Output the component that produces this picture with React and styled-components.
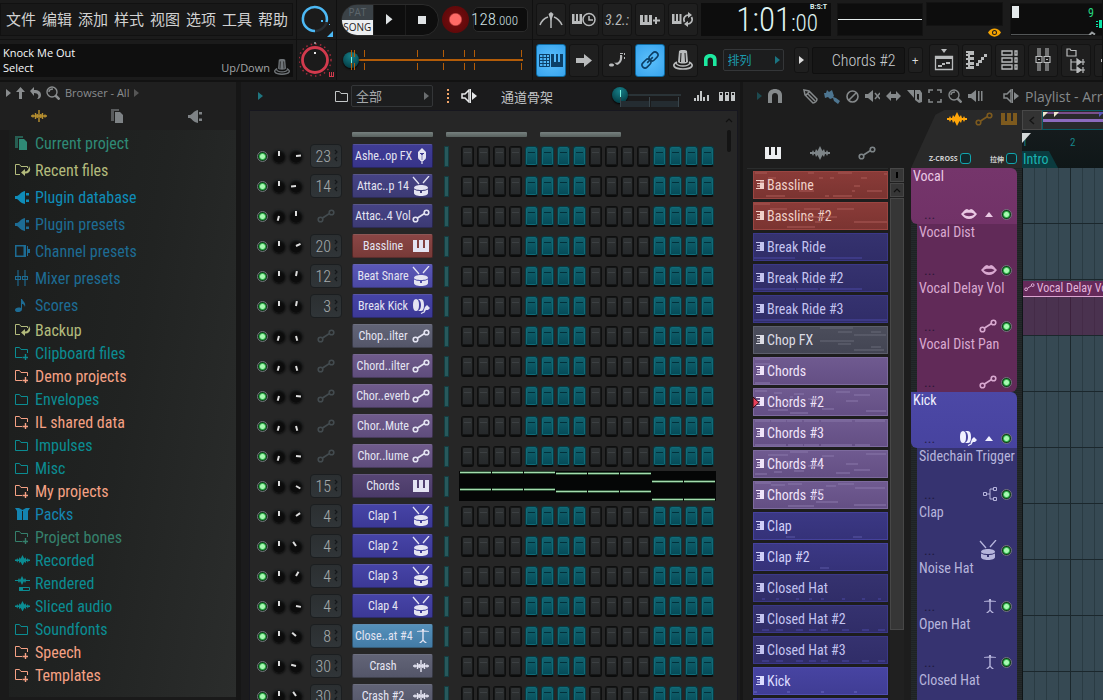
import styled, { createGlobalStyle, css } from "styled-components";
import { useState } from "react";

const GlobalStyle = createGlobalStyle`
* { box-sizing: border-box; }
body {
  margin: 0;
  background: #181818;
  color: #c8cccd;
  font-family: "Open Sans", "Noto Sans CJK SC", sans-serif;
  font-size: 12px;
}
button, input, select { font: inherit; color: inherit; margin: 0; padding: 0; }
button { border: 0; background: none; cursor: pointer; }
svg { display: block; flex: none; }
`;

const narrow = '"Roboto Condensed", "Noto Sans CJK SC", sans-serif';

/* ---------- icons ---------- */

const icons = {
  wave: [20, 14, <path d="M0 6h2l1-2 1 2h1l1-3 1.500 2L10 0l2.500 5L14 3l1 3h1l1-2 1 2h2v2h-2l-1 2-1-2h-1l-1 3-1.500-2L10 14l-2.500-5L6 11 5 8H4l-1 2-1-2H0z" />],
  spikes: [16, 12, <path d="M0 6h16M2 4.500v3M4.500 3v6M8 0v12M6.200 4v4M11.500 3v6M9.800 4v4M14 4.500v3" fill="none" stroke="currentColor" strokeWidth="1.400" />],
  auto: [18, 14, <g fill="none" stroke="currentColor" strokeWidth="1.600"><circle cx="3.500" cy="10.500" r="2.300" /><circle cx="14.500" cy="3.500" r="2.300" /><path d="M5.500 9l7-4.500" /></g>],
  piano: [16, 12, <path d="M0 0h4v8h2V0h4v8h2V0h4v12H0z" />],
  drum: [18, 20, <g><path d="M1 1l6 7M17 0l-6 7" stroke="currentColor" strokeWidth="1.300" /><path d="M2 12c0-2 3-3 7-3s7 1 7 3c0 1-3 2-7 2s-7-1-7-2z" /><path d="M2 13.500c2 1 4 1.500 6 1.500v2h2v-2c2 0 4-.5 6-1.500v3.500c0 2-3 3-7 3s-7-1-7-3z" /></g>],
  kick: [18, 16, <g><path d="M4 1C2 1 1 3 1 7s1 6 3 6 3-2 3-6-1-6-3-6z" /><path d="M6 1h3c2 0 3 2 3 6s-1 6-3 6H6c2-1 3-3 3-6S8 2 6 1z" /><path d="M9 15.500l4-2" stroke="currentColor" strokeWidth="1.200" /><path d="M13 9l2-2 3 3-2 2h-2l-1.500 2-1-1z" /></g>],
  mic: [12, 16, <g><path d="M6 0l4 4v5c0 2-1 3-2 3V5H4v7c-1 0-2-1-2-3V4z" /><path d="M4.500 6v6c0 1 3 1 3 0V6M6 7v9" fill="none" stroke="currentColor" strokeWidth="1.200" /></g>],
  hat: [14, 15, <path d="M1 2l5-.6V0h2v1.400l5 .6v.8H7.700V11l3.300 3H9l-2-2-2 2H3l3.300-3V2.800H1z" />],
  lips: [16, 10, <path fillRule="evenodd" d="M0 5C2 3 4 0 6 0l2 1 2-1c2 0 4 3 6 5-2 3-5 5-8 5S2 8 0 5zm2.500 0C5 8 11 8 13.500 5 11 3.500 9.500 3.500 8 3.800 6.500 3.500 5 3.500 2.500 5z" />],
  route: [14, 14, <path d="M.5 5.500h3v3h-3zM3.500 7H7M10.500 2H7v10h3.500M10.500.5h3v3h-3zM10.500 10.500h3v3h-3z" fill="none" stroke="currentColor" />],
  folder: [13, 12, <path d="M.5 1.500h4l1.500 2h6.500v8H.5z" fill="none" stroke="currentColor" />],
  folderPlus: [13, 14, <g fill="none" stroke="currentColor"><path d="M7 11.500H.5v-10h4l1.500 2h6.500V7" /><path d="M10.500 8v6M7.500 11.500h6" strokeWidth="1.400" /></g>],
  folderBack: [16, 14, <g><path d="M5 11.500H.5v-10h4l1.500 2h6.500V5" fill="none" stroke="currentColor" /><path d="M14 3c3 4 0 8-4 7.500V13L6 9.500 10 6v2.500c2.500 0 4-2 4-5.500z" /></g>],
  pages: [12, 14, <g><path d="M0 0h8v2H3v10H0z" opacity=".6" /><path d="M4 3h5l3 3v8H4z" /></g>],
  plug: [15, 13, <path d="M0 5h2c2 0 3-4 8-5v13C5 12 4 9 2 8H0zM11 2h3v2.500h-3zM11 8.500h3V11h-3z" />],
  channel: [15, 12, <path fillRule="evenodd" d="M0 0h11v12H0zm1.500 1.500v9h7v-9zM12 1h1v3h2v4h-2v3h-1z" />],
  mixer: [13, 16, <path d="M3 0v6M3 10v6M10 0v6M10 10v6M.5 6.500h5v3h-5zM7.500 6.500h5v3h-5zM2 8h2M9 8h2" fill="none" stroke="currentColor" strokeWidth="1.100" />],
  note: [12, 13, <path d="M6 0h1c1 3 4 3 3 8-1-3-2-3-3-3v5c0 4-7 4-7 1 0-2 3-3 6-2z" />],
  box: [15, 12, <path d="M0 0h4l3.500 2L11 0h4l-2 3v9H8V3H7v9H2V3z" />],
  rendered: [16, 15, <g><path d="M0 4h3l1-2 1 2 2-4 2 4 1-2 1 2h4v1h-4l-1 2-1-2-2 4-2-4-1 2-1-2H0z" /><path d="M4.500 11.500h10v3h-10z" fill="none" stroke="currentColor" /><path d="M4 11h4v4H4z" /></g>],
  tri: [5, 8, <path d="M0 0l5 4-5 4z" />],
  up: [9, 12, <path d="M4.500 0L9 5H6v7H3V5H0z" />],
  undo: [11, 12, <path d="M0 4l4-4v3c5 0 7 2 7 5 0 2-1 4-4 4 3-3 1-6-3-6v3z" />],
  search: [14, 14, <g fill="none" stroke="currentColor" strokeWidth="1.400"><circle cx="6" cy="6" r="5" /><path d="M3 6c0-2 2-3 4-3" /><path d="M9.500 9.500l4 4" strokeWidth="2.500" /></g>],
  metronome: [24, 16, <g fill="none" stroke="currentColor" strokeWidth="1.600"><path d="M1 13c2-5 5-7 8-8M15 5c3 1 6 4 8 8" /><path d="M12 3v13" strokeWidth="1.500" /><path d="M9.500 2L12 0l2.500 2L12 9z" fill="currentColor" stroke="none" /></g>],
  pianoClock: [24, 15, <g><path d="M0 2h2.500v7H4V2h2v7h1.500V2H10v10H0z" /><circle cx="17" cy="7.500" r="6" fill="#1d1d1d" stroke="currentColor" strokeWidth="1.500" /><path d="M17 4v4h4" fill="none" stroke="currentColor" strokeWidth="1.500" /></g>],
  pianoPlus: [20, 12, <path d="M0 1h3v7h1.500V1h3v7H9V1h3v10H0zM15 3h2v2.500h3v2h-3V10h-2V7.500h-2v-2h2z" />],
  pianoLoop: [22, 15, <g><path d="M0 2h2.500v7H4V2h2v7h1.500V2h2v10H0z" /><path d="M12.500 10c-2-4 1-7 4-7M19.500 5c2 4-1 7-4 7" fill="none" stroke="currentColor" strokeWidth="1.700" /><path d="M16 0l4 3-4 3zM16 9l-4 3 4 3z" /></g>],
  rackPiano: [24, 13, <g><path d="M.5.5h10v12H.5zM4 .5v12M7.500 .5v12M.5 3.500h10M.5 6.500h10M.5 9.500h10" fill="none" stroke="currentColor" /><path d="M12 0h3v8h2V0h2v8h2V0h3v13H12z" /></g>],
  arrow: [16, 13, <path d="M0 4h8V0l8 6.500L8 13V9H0z" />],
  notes: [16, 14, <g><path d="M0 12c0-2 5-2 5 0s-5 2-5 0z" /><path d="M5 9.500c4 1 6-1 6-5V2h2c1 4-1 9-5 10z" /><path d="M11 0h3v1h-3zM15 0h1v2h-1zM15 4h1v2h-1z" /></g>],
  link: [18, 18, <g fill="none" stroke="currentColor" strokeWidth="1.600" transform="rotate(-45 9 9)"><rect x="-1" y="6" width="10" height="6" rx="3" /><rect x="9" y="6" width="10" height="6" rx="3" /><path d="M5 9h8" /></g>],
  knobFoot: [20, 20, <g><path d="M6 1c2-1.500 6-1.500 8 0l1 11c-2 2-8 2-10 0z" /><path d="M8 3l-.5 9M12 3l.5 9" stroke="#1d1d1d" /><path d="M4 12c-6 3-3 7 6 7s12-4 6-7" fill="none" stroke="currentColor" strokeWidth="1.700" /><path d="M3 13c2 4 12 4 14 0" fill="none" stroke="currentColor" strokeWidth="1.500" /></g>],
  magnet: [14, 14, <path d="M0 14V6c0-8 14-8 14 0v8h-4V7c0-4-6-4-6 0v7z" />],
  playlist: [20, 22, <g><path d="M7 0h6l-3 4zM1 7h18v3H1z" /><path d="M1.500 7.500h17v13h-17z" fill="none" stroke="currentColor" strokeWidth="1.300" /><path d="M4 16h4v2H4zM8 14h3v2H8zM12 13h4v2h-4z" /></g>],
  roll: [21, 18, <path d="M0 0h8v4H4v2h4v3H4v2h4v3H4v1h4v3H0v-2h2v-2H0v-2h2V9H0V7h2V5H0V3h2V2H0zM10 12h3v3h-3zM12 9h4v3h-4zM15 6h3v3h-3zM18 3h3v3h-3z" />],
  rack: [18, 20, <path d="M1 1h10v4H1zM1 8h10v4H1zM1 15h10v4H1zM14 1h2v4h-2zM14 8h2v4h-2zM14 15h2v4h-2z" fill="none" stroke="currentColor" strokeWidth="1.300" />],
  mixerBig: [16, 24, <path d="M3 0v8M5 0v8M3 15v8M5 15v8M11 0v8M13 0v8M11 15v8M13 15v8M1 8.500h6v6H1zM9 8.500h6v6H9zM3 11.500h2M11 11.500h2" fill="none" stroke="currentColor" strokeWidth="1.100" />],
  tree: [20, 25, <g fill="none" stroke="currentColor" strokeWidth="1.200"><path d="M1 1h3l1 1.500h5V8H1zM5 11v11h6M5 14h6" /><path d="M11 11l4 3-4 3zM11 19l4 3-4 3z" fill="currentColor" /><path d="M15 14h4M15 22h4M17 11v6M17 19v6" /></g>],
  speaker: [16, 14, <g><path d="M1 5h3l4-4v12L4 9H1z" fill="none" stroke="currentColor" strokeWidth="1.500" /><path d="M9 0h1v14H9zM11 3l5 4-5 4z" /></g>],
  bars: [15, 10, <path d="M0 7h2v3H0zM3 4h2v6H3zM6 0h2v10H6zM9 6h2v4H9zM13 4h2v6h-2z" />],
  keys: [16, 9, <path fillRule="evenodd" d="M0 0h4v9H0zM6 0h4v9H6zM12 0h4v9h-4zM1 1v2h2V1zM7 1v2h2V1zM13 1v2h2V1z" />],
  pencil: [15, 15, <g fill="none" stroke="currentColor" strokeWidth="1.500"><path d="M1 1l1 5 8 8c2 0 4-2 4-4L6 2zM5 5l7 7M3 6l3-3" /></g>],
  brush: [16, 15, <path d="M0 4l2 0 1-3 2 2 3-2 2 6-1 1 3 1 4 3-2 3-4-3-1-3-3 1-2-2-3 1z" />],
  ban: [13, 13, <g fill="none" stroke="currentColor" strokeWidth="1.600"><circle cx="6.500" cy="6.500" r="5.500" /><path d="M3 10l7-7" /></g>],
  mute: [15, 14, <g><path d="M0 5h3l5-4v12L3 9H0z" /><path d="M10 4l5 6M15 4l-5 6" stroke="currentColor" strokeWidth="1.500" /></g>],
  slip: [15, 10, <path d="M0 5l5-5v3h5V0l5 5-5 5V7H5v3z" />],
  slice: [15, 14, <path fillRule="evenodd" d="M0 1h7v8zM8 1h5l2 3v9l-3 1-4-3zm2 4v5l2 1V5z" />],
  select: [14, 14, <path d="M1 4V1h4M9 1h4v3M13 10v3H9M5 13H1v-3" fill="none" stroke="currentColor" strokeWidth="1.600" />],
  playback: [15, 14, <path d="M0 5h3l5-4v12L3 9H0zM10 2h1.500v10H10zM13 2h1.500v10H13z" />],
  pattern: [8, 9, <path d="M0 0h8v9H0V8h4V6.500H1v-1h3V4H1V3h3V1H0z" />],
  triUp: [8, 5, <path d="M0 5l4-5 4 5z" />],
  chevUp: [8, 5, <path d="M1 4l3-3 3 3" fill="none" stroke="currentColor" strokeWidth="1.200" />],
  chevLeft: [6, 9, <path d="M5 1L1 4.500 5 8" fill="none" stroke="currentColor" strokeWidth="1.500" />],
  eye: [13, 9, <path fillRule="evenodd" d="M0 4.500C3-1 10-1 13 4.500 10 10 3 10 0 4.500zm6.500-2.500a2.500 2.500 0 100 5 2.500 2.500 0 000-5zm0 1a1.500 1.500 0 110 3 1.500 1.500 0 010-3z" />],
};

const Icon = ({ name, color, scale = 1 }) => {
  const [w, h, shape] = icons[name];
  return (
    <svg width={w * scale} height={h * scale} viewBox={`0 0 ${w} ${h}`} fill="currentColor" color={color} aria-hidden="true">
      {shape}
    </svg>
  );
};

/* ---------- small controls ---------- */

const Led = styled.input.attrs({ type: "checkbox" })`
  appearance: none;
  width: 11px;
  height: 11px;
  flex: none;
  border: 1px solid #70757a;
  border-radius: 50%;
  background: #12331a;

  &:checked {
    background: radial-gradient(circle, #a8f9b2 0 2px, #35b84f 3px, #0c4018 4px, #26302a 5px);
  }
`;

const Hidden = styled.span`
  position: absolute;
  width: 1px;
  height: 1px;
  overflow: hidden;
  clip-path: inset(50%);
`;

const KnobFace = styled.label`
  position: relative;
  display: block;
  width: 14px;
  height: 14px;
  border-radius: 50%;
  background: radial-gradient(circle at 50% 60%, #0c0c0c 0 45%, #171818 60%, #373c40 100%);
  box-shadow: 0 1px 2px #0d0d0d;

  &::after {
    content: "";
    position: absolute;
    left: 6px;
    top: 2px;
    width: 2px;
    height: 5px;
    background: #dcdcdc;
    transform-origin: 1px 5px;
    transform: rotate(${(p) => p.$angle}deg);
  }
`;

const Knob = ({ angle, label }) => (
  <KnobFace $angle={angle}>
    <Hidden>
      <input type="range" min="-180" max="180" defaultValue={angle} aria-label={label} />
    </Hidden>
  </KnobFace>
);

const Slider = styled.input.attrs({ type: "range" })`
  appearance: none;
  display: block;
  width: 100%;
  height: 16px;
  background: linear-gradient(${(p) => p.$track}, ${(p) => p.$track}) 8px 7px / 100% 2px no-repeat;

  &::-webkit-slider-thumb {
    appearance: none;
    width: 16px;
    height: 16px;
    border-radius: 50%;
    background:
      linear-gradient(#7df3e0, #7df3e0) 50% 50% / 1px 10px no-repeat,
      radial-gradient(circle at 50% 25%, #178089, #06444c 75%);
    box-shadow: 0 1px 2px #000;
  }
`;

const Picker = styled.select`
  appearance: none;
  height: 22px;
  padding: 0 6px 0 4px;
  border: 1px solid #343638;
  border-radius: 2px;
  font-size: ${(p) => p.$size}px;
  color: ${(p) => p.$color};
  background: #1c1d1e;
  width: 100%;
`;

const PickerWrap = styled.div`
  position: relative;
  flex: none;
  width: ${(p) => p.$w}px;

  & > svg {
    position: absolute;
    right: 4px;
    top: 7px;
    pointer-events: none;
  }
`;

/* ---------- top bar ---------- */

const Page = styled.div`
  display: flex;
  flex-direction: column;
  height: 100vh;
  overflow: hidden;
  background: #161616;
`;

const TopBar = styled.header`
  display: flex;
  flex: none;
  height: 82px;
  background: #1b1b1b;
  border-bottom: 2px solid #121212;
`;

const Group = styled.div`
  display: grid;
  grid-template-rows: 39px 41px;
  flex: none;
  width: ${(p) => p.$w}px;
  border-right: 1px solid #101010;

  &:last-child {
    flex: 1;
    min-width: 0;
    overflow: hidden;
  }
`;

const BarRow = styled.div`
  display: flex;
  align-items: center;
  gap: ${(p) => p.$gap || 0}px;
  padding-left: ${(p) => p.$pad || 0}px;
  min-width: 0;

  & + & {
    border-top: 1px solid #111;
  }
`;

const Menu = styled.nav`
  display: flex;
  align-items: center;
  gap: 6px;
  width: 293px;
  height: 33px;
  padding: 0 0 2px 5px;
  border: 1px solid #111;
  background: #181818;

  a {
    color: #d2d2d2;
    font: 15px "Noto Sans CJK SC", sans-serif;
    line-height: 20px;
    text-decoration: none;
    white-space: nowrap;
  }
`;

const Hint = styled.div`
  display: grid;
  grid-template-columns: 1fr auto;
  align-content: center;
  align-items: center;
  width: 293px;
  height: 33px;
  padding: 0 3px;
  background: #0f0f0f;
  color: #f6f9fa;
  font-size: 11px;
  line-height: 15px;

  p { margin: 0; }
`;

const HintRight = styled.p`
  display: flex;
  align-items: end;
  gap: 4px;
  height: 15px;
  color: #a3a6a8;
`;

const Pill = styled.div`
  display: flex;
  flex: none;
  width: 98px;
  height: 32px;
  border-radius: 16px;
  overflow: hidden;
  background: #0e0e0e;
  border: 1px solid #2b2b2b;
`;

const PatSong = styled.div`
  display: grid;
  grid-template-rows: 1fr 1fr;
  width: 31px;
  background: #3d4449;
`;

const ModeButton = styled.button`
  font-size: 10px;
  line-height: 14px;
  color: ${(p) => (p.$on ? "#1c1c1c" : "#5d666c")};
  background: ${(p) => (p.$on ? "#eceef0" : "#3b4247")};
`;

const PlayButton = styled.button`
  display: grid;
  place-items: center;
  width: 33px;
  border-left: 1px solid #1d1d1d;
  color: #dfe3e5;
`;

const Square = styled.span`
  width: 8px;
  height: 8px;
  background: currentColor;
`;

const Record = styled.button`
  flex: none;
  width: 27px;
  height: 27px;
  margin: 0 4px 0 3px;
  border-radius: 50%;
  background: radial-gradient(circle, #ff6a66 0 28%, #6d0b0d 36%, #560707 100%);
`;

const Tempo = styled.button`
  display: flex;
  align-items: baseline;
  justify-content: end;
  flex: none;
  width: 55px;
  height: 25px;
  padding-right: 9px;
  border: 1px solid #2a2a2a;
  border-radius: 5px;
  background: #0d0d0d;
  color: #cfe0e3;
  font: 300 17px ${narrow};
  line-height: 22px;

  small { font-size: 13px; }
`;

const Song = styled.div`
  position: relative;
  width: 180px;
`;

const Ticks = styled.svg`
  position: absolute;
  left: 0;
  top: -2px;
`;

const Tool = styled.button`
  display: grid;
  place-items: center;
  flex: none;
  width: 30px;
  height: 33px;
  border-radius: 3px;
  border: 1px solid #131313;
  background: #1f1f1f;
  color: #b9bbbc;

  ${(p) =>
    p.$on &&
    css`
      border-color: #0d6aa0;
      background: radial-gradient(circle, #5cc0fb, #38a4ee);
      color: #0c3f66;
    `}
`;

const SmallTool = styled(Tool)`
  width: 15px;
  height: 26px;
  color: #dcdcdc;
`;

const Digits = styled.span`
  font: italic 400 14px ${narrow};
`;

const Clock = styled.div`
  position: relative;
  display: flex;
  align-items: baseline;
  justify-content: end;
  flex: none;
  width: 130px;
  height: 33px;
  padding-right: 13px;
  background: #0d0d0d;
  color: #dff3f2;
  font: 300 33px ${narrow};
  line-height: 34px;

  small { font-size: 23px; }
`;

const ClockMode = styled.span`
  position: absolute;
  right: 4px;
  top: 0;
  font: 700 7px Roboto, sans-serif;
  line-height: 9px;
`;

const Screen = styled.div`
  width: ${(p) => p.$w}px;
  height: ${(p) => p.$h}px;
  flex: none;
  background: #0d0d0d;
  border: 1px solid #131313;
`;

const Scope = styled.div`
  display: flex;
  flex-direction: column;
  align-items: end;
  gap: 2px;
  height: 35px;
  flex: none;
`;

const Cpu = styled(Screen)`
  flex: 1 0 94px;
`;

const PatternName = styled.button`
  flex: none;
  width: 93px;
  height: 27px;
  border: 1px solid #0f0f0f;
  border-radius: 2px;
  padding-right: 8px;
  background: #161616;
  color: #c9cdcf;
  text-align: right;
  font: 300 16px ${narrow};
`;

const Spacer = styled.span`
  flex: none;
  width: ${(p) => p.$w}px;
`;

const menuItems = ["文件", "编辑", "添加", "样式", "视图", "选项", "工具", "帮助"];

const MainVolume = () => (
  <svg width="34" height="34" viewBox="0 0 34 34" fill="none">
    <circle cx="15" cy="16" r="12" stroke="#2a2f33" strokeWidth="2.500" />
    <path d="M15 28A12 12 0 1 1 26.500 19" stroke="#4cb9f5" strokeWidth="2.500" />
    <path d="M21 17h2v2h-2zM29 21h1v1h-1z" fill="#4cb9f5" />
    <path d="M33 28v6h-6z" fill="#4cb9f5" />
  </svg>
);

const MainPitch = () => (
  <svg width="36" height="36" viewBox="0 0 36 36" fill="none">
    <circle cx="16" cy="18" r="16" stroke="#a02a3a" strokeWidth="1.500" strokeDasharray="1.500 3.200" />
    <circle cx="16" cy="18" r="12.500" stroke="#d23a4d" strokeWidth="2.800" />
    <path d="M15 10h2v2h-2zM15.500 0h1v2h-1z" fill="#e8e8e8" />
    <path d="M30 30h1v4h1v-4h1v4h1v-4h1v5h-5z" fill="#d23a4d" />
  </svg>
);

const tickPositions = [8, 11, 21, 74, 100, 121, 131, 178];

const Header = () => (
  <TopBar>
    <Group $w={297}>
      <BarRow>
        <Menu>
          {menuItems.map((m) => (
            <a href="#menu" key={m}>{m}</a>
          ))}
        </Menu>
      </BarRow>
      <BarRow>
        <Hint>
          <p>Knock Me Out</p>
          <span />
          <p>Select</p>
          <HintRight>
            Up/Down <Icon name="knobFoot" color="#6f7478" scale={0.8} />
          </HintRight>
        </Hint>
      </BarRow>
    </Group>

    <Group $w={40}>
      <BarRow $pad={3}><MainVolume /></BarRow>
      <BarRow $pad={2}><MainPitch /></BarRow>
    </Group>

    <Group $w={196}>
      <BarRow $pad={4}>
        <Pill>
          <PatSong>
            <ModeButton>PAT</ModeButton>
            <ModeButton $on>SONG</ModeButton>
          </PatSong>
          <PlayButton aria-label="Play"><Icon name="tri" scale={1.3} /></PlayButton>
          <PlayButton aria-label="Stop"><Square /></PlayButton>
        </Pill>
        <Record aria-label="Record" />
        <Tempo>128<small>.000</small></Tempo>
      </BarRow>
      <BarRow $pad={6}>
        <Song>
          <Ticks width="182" height="20" stroke="#b35c08">
            {tickPositions.map((x) => (
              <path key={x} d={`M${x}.5 0v7M${x}.5 13v7`} />
            ))}
          </Ticks>
          <Slider $track="#b35c08" defaultValue="0" aria-label="Song position" />
        </Song>
      </BarRow>
    </Group>

    <Group>
      <BarRow $pad={3} $gap={3}>
        <Tool aria-label="Metronome"><Icon name="metronome" /></Tool>
        <Tool aria-label="Wait for input"><Icon name="pianoClock" /></Tool>
        <Tool aria-label="Countdown"><Digits>3.2.:</Digits></Tool>
        <Tool aria-label="Overdub"><Icon name="pianoPlus" /></Tool>
        <Tool aria-label="Loop record"><Icon name="pianoLoop" /></Tool>
        <Clock>
          1:01<small>:00</small>
          <ClockMode>B:S:T</ClockMode>
        </Clock>
        <Spacer $w={0} />
        <Screen $w={86} $h={33}>
          <svg width="84" height="31"><path d="M0 15.500h84" stroke="#e4ecec" /></svg>
        </Screen>
        <Scope>
          <Screen $w={77} $h={24} />
          <Spacer $w={15}><Icon name="eye" color="#f5a300" /></Spacer>
        </Scope>
        <Spacer $w={1} />
        <Cpu $h={33}>
          <svg width="94" height="31">
            <path d="M1 2h7v12H1z" fill="#e3e8ea" />
            <path d="M0 31.500h78l3-3 3 2" fill="none" stroke="#9a9fa1" strokeWidth="2" />
            <text x="77" y="13" fill="#27d982" fontSize="12" fontFamily="Roboto Condensed">9</text>
            <path d="M88 16h6v8h-6zM85 17h2v1h-2zM85 20h2v1h-2zM85 22h2v1h-2z" fill="#0be5a8" />
          </svg>
        </Cpu>
      </BarRow>
      <BarRow $pad={3} $gap={3}>
        <Tool $on aria-label="Typing keyboard"><Icon name="rackPiano" /></Tool>
        <Tool aria-label="Step edit"><Icon name="arrow" /></Tool>
        <Tool aria-label="Slide"><Icon name="notes" /></Tool>
        <Tool $on aria-label="Link"><Icon name="link" /></Tool>
        <Tool aria-label="Multilink"><Icon name="knobFoot" /></Tool>
        <Spacer $w={0} />
        <Icon name="magnet" color="#1de9a0" scale={0.9} />
        <Spacer $w={0} />
        <PickerWrap $w={61}>
          <Picker $size={12} $color="#1b9aac" aria-label="Snap">
            <option>排列</option>
          </Picker>
          <Icon name="tri" color="#1a7380" />
        </PickerWrap>
        <Spacer $w={4} />
        <SmallTool aria-label="Pattern menu"><Icon name="tri" /></SmallTool>
        <PatternName>Chords #2</PatternName>
        <SmallTool aria-label="New pattern">+</SmallTool>
        <Spacer $w={0} />
        {["playlist", "roll", "rack", "mixerBig", "tree", "plug"].map((n) => (
          <Tool key={n} aria-label={n}><Icon name={n} /></Tool>
        ))}
      </BarRow>
    </Group>
  </TopBar>
);

/* ---------- browser ---------- */

const Body = styled.div`
  display: flex;
  flex: 1;
  min-height: 0;
`;

const BrowserPane = styled.aside`
  flex: none;
  width: 236px;
  background: #1a1a1a;
`;

const BrowserHead = styled.div`
  height: 48px;
  background: #1f1f1f;
  color: #8a8d8f;
`;

const BrowserTitle = styled.div`
  display: flex;
  align-items: center;
  gap: 5px;
  height: 21px;
  padding-left: 6px;
  font-size: 11px;
`;

const BrowserTabs = styled.div`
  display: grid;
  grid-template-columns: repeat(3, 78px);
  height: 26px;
  color: #7e8285;

  button { display: grid; place-items: center; }
`;

const Tree = styled.ul`
  margin: 0 0 0 9px;
  padding: 0 0 10px;
  list-style: none;
  background: linear-gradient(100deg, #1b1d1c, #212322 50%, #2b2d2c);
`;

const TreeItem = styled.li`
  a {
    display: grid;
    grid-template-columns: 20px 1fr;
    align-items: center;
    height: ${(p) => p.$h}px;
    padding: 0 0 1px 6px;
    color: ${(p) => p.$color};
    font: 16px ${narrow};
    text-decoration: none;
  }
`;

const teal = "#0b8c92";
const blue = "#1d6c94";
const salmon = "#f5a184";
const olive = "#b3bb7c";

const tree = [
  ["Current project", "pages", "#2f8a76", 27],
  ["Recent files", "folderBack", olive, 27],
  ["Plugin database", "plug", "#0f8cb8", 27],
  ["Plugin presets", "plug", blue, 27],
  ["Channel presets", "channel", blue, 27],
  ["Mixer presets", "mixer", blue, 27],
  ["Scores", "note", blue, 27],
  ["Backup", "folderBack", olive, 23],
  ["Clipboard files", "folderPlus", teal, 23],
  ["Demo projects", "folderPlus", salmon, 23],
  ["Envelopes", "folder", teal, 23],
  ["IL shared data", "folderPlus", salmon, 23],
  ["Impulses", "folder", teal, 23],
  ["Misc", "folder", teal, 23],
  ["My projects", "folderPlus", salmon, 23],
  ["Packs", "box", "#1484b0", 23],
  ["Project bones", "folderPlus", "#35806c", 23],
  ["Recorded", "wave", teal, 23],
  ["Rendered", "rendered", teal, 23],
  ["Sliced audio", "wave", teal, 23],
  ["Soundfonts", "folder", teal, 23],
  ["Speech", "folderPlus", salmon, 23],
  ["Templates", "folderPlus", salmon, 23],
];

const Browser = () => (
  <BrowserPane>
    <BrowserHead>
      <BrowserTitle>
        <Icon name="tri" />
        <Icon name="up" />
        <Icon name="undo" />
        <Icon name="search" />
        Browser - All
        <Icon name="tri" color="#555" />
      </BrowserTitle>
      <BrowserTabs>
        <button aria-label="All"><Icon name="spikes" color="#b8902f" /></button>
        <button aria-label="Project"><Icon name="pages" /></button>
        <button aria-label="Plugins"><Icon name="plug" /></button>
      </BrowserTabs>
    </BrowserHead>
    <Tree>
      {tree.map(([name, icon, color, h]) => (
        <TreeItem key={name} $h={h} $color={color}>
          <a href="#browse">
            <Icon name={icon} scale={icon === "wave" ? 0.75 : 1} />
            {name}
          </a>
        </TreeItem>
      ))}
    </Tree>
  </BrowserPane>
);

/* ---------- channel rack ---------- */

const RackPane = styled.section`
  display: flex;
  flex-direction: column;
  flex: none;
  width: 499px;
  margin-left: 5px;
  padding-left: 8px;
  background: #1b1b1c;
`;

const RackHead = styled.div`
  display: flex;
  align-items: center;
  flex: none;
  height: 28px;
  padding-left: 9px;
  color: #c3c6c7;
`;

const RackTitle = styled.h2`
  margin: 0;
  width: 111px;
  font: 400 13px "Noto Sans CJK SC", sans-serif;
`;

const Swing = styled.div`
  position: relative;
  width: 69px;
  height: 18px;
`;

const SwingScale = styled.svg`
  position: absolute;
  left: 8px;
  top: 10px;
`;

const RackBody = styled.div`
  display: flex;
  flex: 1;
  min-height: 0;
  overflow: hidden;
  margin-right: 2px;
  border: 1px solid #17171f;
  border-bottom: 0;
  background: #262626;
`;

const Channels = styled.div`
  width: 471px;
  padding: 21px 0 0 7px;
`;

const Caps = styled.div`
  display: flex;
  gap: 13px;
  padding: 0 0 4px 95px;

  span {
    width: 81px;
    height: 5px;
    border-radius: 1px;
    background: linear-gradient(#76807f, #59625f);
  }
`;

const ChannelRow = styled.div`
  display: grid;
  grid-template-columns: 15px 17px 21px 42px 92px 15px 1fr;
  align-items: center;
  height: 30px;
`;

const Target = styled.button`
  display: flex;
  align-items: center;
  justify-content: end;
  gap: 3px;
  width: 32px;
  height: 24px;
  padding-right: 3px;
  border: 1px solid #1b1e20;
  border-radius: 4px;
  background: linear-gradient(#2b2f31, #303538);
  color: #a5abad;
  font: 300 16px ${narrow};
`;

const TargetAuto = styled.span`
  display: grid;
  place-items: center;
  width: 32px;
`;

const NameButton = styled.button`
  display: grid;
  grid-template-columns: 1fr 20px;
  align-items: center;
  justify-items: center;
  width: 81px;
  height: 24px;
  padding: 0 1px 0 2px;
  border: 1px solid rgba(0, 0, 0, 0.35);
  border-top-color: rgba(255, 255, 255, 0.15);
  border-radius: 2px;
  background: linear-gradient(${(p) => p.$from}, ${(p) => p.$to});
  color: #e4e4f2;
  font: 12px ${narrow};
  white-space: nowrap;
`;

const SelectBar = styled.button`
  width: 5px;
  height: 21px;
  border: 1px solid #143c40;
  background: #27595c;
`;

const Steps = styled.div`
  display: grid;
  grid-template-columns: repeat(16, 16px);
  justify-items: center;
`;

const Step = styled.button`
  width: 13px;
  height: 21px;
  border: 1px solid ${(p) => (p.$on ? "#0a3940" : "#0e0f0f")};
  border-bottom: 2px solid #0b0c0c;
  border-radius: 3px;
  background:
    linear-gradient(${(p) => (p.$on ? "#02303a" : "#3c4042")}, ${(p) => (p.$on ? "#02303a" : "#3c4042")}) 50% 5px / 7px 1px no-repeat,
    ${(p) => (p.$on ? "linear-gradient(#136470, #044a57)" : "linear-gradient(#303334, #25282a)")};
  box-shadow: inset 0 0 0 1px ${(p) => (p.$on ? "#0f6b78" : "#161717")};
`;

const Roll = styled.svg`
  background: #050606;
`;

const RackScroll = styled.div`
  display: flex;
  flex-direction: column;
  align-items: center;
  gap: 7px;
  width: 16px;
  padding-top: 7px;
  color: #111;

  span {
    width: 4px;
    height: 22px;
    border-radius: 2px;
    background: #141414;
  }
`;

const indigo = ["#403d96", "#37348a"];
const slate = ["#464385", "#3c3a74"];
const bright = ["#4644a6", "#3c3996"];
const grey = ["#626477", "#545669"];
const plum = ["#6f5b8c", "#5f4d7c"];

const channels = [
  ["Ashe..op FX", "mic", indigo, 23, 0, 85],
  ["Attac..p 14", "drum", slate, 14, 0, -95],
  ["Attac..4 Vol", "auto", slate, null, 195, 0],
  ["Bassline", "piano", ["#8a4645", "#783a38"], 20, 0, 65],
  ["Beat Snare", "drum", ["#5b58b8", "#4b48a4"], 12, 0, 10],
  ["Break Kick", "kick", bright, 3, 0, 10],
  ["Chop..ilter", "auto", grey, null, 195, 165],
  ["Chord..ilter", "auto", plum, null, 195, 165],
  ["Chor..everb", "auto", plum, null, 195, 95],
  ["Chor..Mute", "auto", plum, null, 195, 165],
  ["Chor..lume", "auto", plum, null, 195, 95],
  ["Chords", "piano", ["#574675", "#4a3a68"], 15, 0, 120],
  ["Clap 1", "drum", bright, 4, 0, 55],
  ["Clap 2", "drum", bright, 4, 0, -35],
  ["Clap 3", "drum", bright, 4, 0, 30],
  ["Clap 4", "drum", bright, 4, 0, 100],
  ["Close..at #4", "hat", ["#5590ba", "#437ba6"], 8, 0, -50],
  ["Crash", "spikes", grey, 30, 0, -75],
  ["Crash #2", "spikes", grey, 30, 0, -35],
];

const StepRow = ({ name }) => {
  const [steps, setSteps] = useState(() => Array.from({ length: 16 }, (_, i) => i % 8 > 3));
  const toggle = (i) => setSteps(steps.map((s, n) => (n === i ? !s : s)));

  return (
    <Steps>
      {steps.map((tone, i) => (
        <Step key={i} $on={tone} aria-label={`${name} step ${i + 1}`} onClick={() => toggle(i)} />
      ))}
    </Steps>
  );
};

const rollLines =
  "M1 1.500h31M33 1.500h31M65 1.500h31M97 2.500h31M129 2.500h31M161 2.500h31M193 10.500h31M225 10.500h31" +
  "M1 18.500h31M33 18.500h31M65 18.500h31M97 20.500h31M129 20.500h31M161 20.500h31M193 28.500h31M225 28.500h31";

const ChannelRack = () => (
  <RackPane>
    <RackHead>
      <Icon name="tri" color="#1f7680" />
      <Spacer $w={72} />
      <Icon name="folder" />
      <Spacer $w={3} />
      <PickerWrap $w={82}>
        <Picker $size={13} $color="#a5a8aa" aria-label="Channel filter">
          <option>全部</option>
        </Picker>
        <Icon name="tri" color="#6a6d6f" />
      </PickerWrap>
      <Spacer $w={14} />
      <svg width="2" height="14"><path d="M1 0v14" stroke="#f0a468" strokeWidth="2" strokeDasharray="2 2" /></svg>
      <Spacer $w={12} />
      <Icon name="speaker" color="#e6e8e9" />
      <Spacer $w={24} />
      <RackTitle>通道骨架</RackTitle>
      <Swing>
        <SwingScale width="60" height="10"><path d="M1 4h28v6H1zM31 4h28v6H31z" fill="#242c31" /><path d="M.5 0v10M29.500 0v10M58.500 0v10" stroke="#39454b" /></SwingScale>
        <Slider $track="#2a3337" defaultValue="0" aria-label="Swing" />
      </Swing>
      <Spacer $w={13} />
      <Icon name="bars" />
      <Spacer $w={10} />
      <Icon name="keys" />
    </RackHead>
    <RackBody>
      <Channels>
        <Caps><span /><span /><span /></Caps>
        {channels.map(([name, icon, [from, to], target, pan, vol]) => (
          <ChannelRow key={name}>
            <Led defaultChecked aria-label={`${name} on`} />
            <Knob angle={pan} label={`${name} pan`} />
            <Knob angle={vol} label={`${name} volume`} />
            {target === null ? (
              <TargetAuto><Icon name="auto" color="#434b4f" /></TargetAuto>
            ) : (
              <Target>
                {target}
                <svg width="4" height="14" fill="none" stroke="#15181a" strokeWidth="1.200"><path d="M1 1l2 2-2 2M3 8L1 10l2 2" /></svg>
              </Target>
            )}
            <NameButton $from={from} $to={to}>
              {name}
              <Icon name={icon} />
            </NameButton>
            <SelectBar aria-label={`Select ${name}`} />
            {name === "Chords" ? (
              <Roll width="257" height="30" fill="none">
                <path d={rollLines} stroke="#2f5238" strokeWidth="3" />
                <path d={rollLines} stroke="#a5dcae" />
              </Roll>
            ) : (
              <StepRow name={name} />
            )}
          </ChannelRow>
        ))}
      </Channels>
      <RackScroll>
        <Icon name="chevUp" />
        <span />
      </RackScroll>
    </RackBody>
  </RackPane>
);

/* ---------- playlist ---------- */

const PlaylistPane = styled.section`
  display: flex;
  flex-direction: column;
  flex: 1;
  min-width: 0;
  margin-left: 3px;
  background: #1d1d1d;
`;

const PlaylistHead = styled.div`
  display: flex;
  align-items: center;
  flex: none;
  gap: 6px;
  height: 28px;
  padding-left: 14px;
  overflow: hidden;
  color: #85898b;
  font-size: 14px;
  white-space: nowrap;
`;

const PlaylistBody = styled.div`
  display: grid;
  grid-template-columns: 161px 118px 1fr;
  flex: 1;
  min-height: 0;
  overflow: hidden;
`;

const PickerTabs = styled.div`
  display: grid;
  grid-template-columns: repeat(3, 47px);
  align-items: end;
  height: 58px;
  padding: 0 0 7px 6px;

  button { display: grid; place-items: center; height: 16px; }
`;

const PickerCols = styled.div`
  display: flex;
  gap: 2px;
`;

const PatternList = styled.ul`
  display: grid;
  gap: 3px;
  width: 141px;
  margin: 0 0 0 4px;
  padding: 2px 0 0 6px;
  list-style: none;
  border-top: 1px solid #2a2c2c;
`;

const PatternItem = styled.button`
  position: relative;
  display: flex;
  align-items: center;
  gap: 3px;
  width: 135px;
  height: 28px;
  padding: 0 0 1px 2px;
  border: 1px solid ${(p) => p.$edge};
  background: linear-gradient(${(p) => p.$from}, ${(p) => p.$to});
  color: ${(p) => p.$ink};
  font: 14px ${narrow};
`;

const Notes = styled.svg`
  position: absolute;
  left: 0;
  top: 0;
`;

const Current = styled.svg`
  position: absolute;
  left: -2px;
  top: 7px;
`;

const PickerScroll = styled.div`
  display: flex;
  flex-direction: column;
  gap: 1px;
  width: 14px;
  height: 532px;
  background: #202020;

  span {
    display: grid;
    place-items: center;
    height: 14px;
    border: 1px solid #474747;
    background: #363636;
    color: #101010;
  }
  span:last-child { height: 432px; }
`;

const red = ["#8a3b38", "#7b3431", "#9a4541", "#f0d0c8", "#a55551"];
const navy = ["#35326f", "#302d68", "#3b3888", "#c4c4f0", "#46439a"];
const stone = ["#4b4d5b", "#434553", "#5c5e6c", "#dcdce4", "#626472"];
const violet = ["#6f5a90", "#644f84", "#7d6a9e", "#f0e4fa", "#8572a6"];
const royal = ["#3b3884", "#353279", "#45429c", "#d0d0f8", "#55529f"];
const cobalt = ["#4744a2", "#403d95", "#514eb0", "#dcdcff", "#6462ba"];

const low = [[0, 24, 41], [42, 24, 22], [66, 24, 42]];
const taps = [[8, 24, 3], [22, 24, 3], [42, 24, 3], [55, 24, 3], [67, 24, 3], [88, 24, 3], [108, 24, 3], [124, 24, 3]];
const arp = [[1, 2, 12], [20, 4, 8], [32, 14, 4], [36, 8, 3], [40, 5, 10], [54, 10, 14], [68, 20, 12], [92, 12, 12], [100, 6, 16], [14, 21, 20], [36, 24, 18], [112, 22, 20], [82, 3, 14]];
const held = [[1, 1, 15], [17, 1, 15], [33, 1, 15], [50, 1, 15], [67, 1, 31], [101, 1, 30], [1, 25, 31], [34, 25, 15], [50, 25, 15], [67, 25, 31], [101, 25, 15]];

const patterns = [
  ["Bassline", red, [[1, 1, 12], [54, 1, 6], [84, 1, 14], [130, 2, 3], [6, 10, 4], [14, 6, 8], [65, 6, 4], [76, 6, 4], [107, 6, 6], [100, 14, 6], [45, 19, 15], [98, 19, 3], [113, 19, 15], [12, 24, 19], [71, 24, 4], [79, 24, 19]]],
  ["Bassline #2", red, [[0, 1, 16], [16, 6, 17], [50, 6, 16], [83, 6, 17], [50, 14, 33], [61, 19, 6], [100, 19, 34], [33, 24, 28]]],
  ["Break Ride", navy, [[0, 24, 41], [66, 24, 42]]],
  ["Break Ride #2", navy, low],
  ["Break Ride #3", navy, [[0, 24, 133]]],
  ["Chop FX", stone, [[66, 1, 33], [84, 5, 14], [117, 5, 10], [66, 14, 34], [100, 8, 32], [84, 17, 13], [117, 20, 10], [100, 23, 30]]],
  ["Chords", violet, [[1, 1, 15], [1, 6, 15], [1, 25, 15]]],
  ["Chords #2", violet, arp],
  ["Chords #3", violet, held],
  ["Chords #4", violet, arp.map(([x, y, w]) => [x, 25 - y, w])],
  ["Chords #5", violet, [[1, 1, 16], [17, 3, 14], [34, 2, 14], [62, 8, 8], [72, 4, 10], [84, 2, 16], [101, 6, 30], [58, 14, 12], [34, 24, 26], [62, 20, 22], [100, 23, 32]]],
  ["Clap", royal, [[32, 24, 9], [99, 24, 9]]],
  ["Clap #2", royal, [[66, 24, 9]]],
  ["Closed Hat", navy, taps],
  ["Closed Hat #2", navy, taps.map(([x, y, w]) => [x, y, w + 4])],
  ["Closed Hat #3", navy, taps.map(([x, y, w]) => [x, y, w + 4])],
  ["Kick", cobalt, [[0, 24, 3], [33, 24, 3], [67, 24, 3], [100, 24, 3]]],
  ["Kick #2", cobalt, []],
];

const TracksHead = styled.div`
  display: flex;
  flex-direction: column;
  justify-content: space-between;
  height: 58px;
  margin-left: 7px;
  padding: 2px 5px 4px 18px;
  background: #292929;
  clip-path: polygon(0 100%, 22% 8%, 30% 0, 100% 0, 100% 100%);
`;

const HeadRow = styled.div`
  display: flex;
  align-items: center;
  justify-content: ${(p) => (p.$tools ? "flex-end" : "space-between")};
  gap: 8px;
`;

const HeadCheck = styled.label`
  display: flex;
  align-items: center;
  gap: 2px;
  color: #cfcfcf;
  font: 700 7px "Open Sans", "Noto Sans CJK SC", sans-serif;

  input {
    appearance: none;
    width: 11px;
    height: 11px;
    border: 1px solid #12a5ae;
    border-radius: 3px;
    background: #12282b;
  }
`;

const Tracks = styled.div`
  margin-left: 7px;
  padding-right: 5px;
  background: repeating-linear-gradient(0deg, #24292b 0 1px, #1e2324 1px 2px);
`;

const Track = styled.div`
  display: flex;
  flex-direction: column;
  justify-content: space-between;
  height: 56px;
  margin-left: ${(p) => (p.$group ? 0 : 6)}px;
  padding: 0 5px 3px 2px;
  border-radius: ${(p) => (p.$group ? "0 6px 0 6px" : p.$last ? "0 0 6px 0" : "0")};
  background: ${(p) => p.$bg};
  color: ${(p) => p.$ink};
  font: 14px ${narrow};
  white-space: nowrap;
`;

const TrackFoot = styled.div`
  display: flex;
  align-items: center;
  justify-content: end;
  gap: ${(p) => (p.$group ? 8 : 4)}px;
  height: 14px;
`;

const Dots = styled.span`
  margin: 0 auto 0 ${(p) => (p.$group ? 11 : 5)}px;
  color: rgba(20, 15, 40, 0.7);
`;

const vocal = "linear-gradient(#75356b, #713267)";
const vocalSub = "#612a58";
const kickBg = "linear-gradient(#4c48a6, #47439f)";
const kickSub = "#363370";

const tracks = [
  ["Vocal", "lips", vocal, "#eac9e4", true],
  ["Vocal Dist", "lips", vocalSub, "#d9a9d0"],
  ["Vocal Delay Vol", "auto", vocalSub, "#d9a9d0"],
  ["Vocal Dist Pan", "auto", vocalSub, "#d9a9d0", false, true],
  ["Kick", "kick", kickBg, "#f0f0ff", true],
  ["Sidechain Trigger", "route", kickSub, "#b6b5dc"],
  ["Clap", "drum", kickSub, "#b6b5dc"],
  ["Noise Hat", "hat", kickSub, "#b6b5dc"],
  ["Open Hat", "hat", kickSub, "#b6b5dc"],
  ["Closed Hat", "hat", kickSub, "#b6b5dc"],
];

const Timeline = styled.div`
  display: flex;
  flex-direction: column;
  min-width: 0;
  overflow: hidden;
`;

const Overview = styled.div`
  display: flex;
  flex: none;
  height: 20px;

  button {
    display: grid;
    place-items: center;
    width: 20px;
    border: 1px solid #484848;
    background: #333;
    color: #151515;
  }
`;

const MiniMap = styled.div`
  flex: 1;
  overflow: hidden;
  border: 1px solid #0b5a63;
  border-right: 0;
  background: #2a2a2c;
`;

const Ruler = styled.div`
  position: relative;
  display: flex;
  flex-direction: column;
  justify-content: space-between;
  flex: none;
  height: 38px;
  padding-top: 6px;
  background: linear-gradient(#151b1d, #0f1718);
  color: #17868a;
  font: 11px ${narrow};
`;

const Beats = styled.div`
  display: grid;
  grid-template-columns: 48px 48px;
`;

const Marker = styled.div`
  width: 36px;
  height: 17px;
  padding-left: 1px;
  background: #0b3b3f;
  clip-path: polygon(0 0, 75% 0, 100% 100%, 0 100%);
  color: #19b3b0;
  font: 14px ${narrow};
  line-height: 16px;
`;

const Playhead = styled.svg`
  position: absolute;
  left: 0;
  top: 3px;
`;

const Grid = styled.div`
  flex: 1;
  padding-top: 113px;
  background:
    repeating-linear-gradient(180deg, transparent 0 55px, #1b272c 55px 56px),
    repeating-linear-gradient(90deg, transparent 0 47px, #1b272c 47px 48px),
    repeating-linear-gradient(90deg, #364953 0 11px, #2a3b43 11px 12px);
  border-left: 1px solid #101517;
`;

const Clip = styled.div`
  height: 54px;
  overflow: hidden;
  background: rgba(94, 28, 76, 0.5);
`;

const ClipTitle = styled.div`
  display: flex;
  align-items: center;
  gap: 2px;
  height: 16px;
  padding: 0 0 2px 1px;
  border-bottom: 1px solid #dba3d0;
  background: #652a5a;
  color: #e2b4da;
  font: 12px ${narrow};
  white-space: nowrap;
`;

const Playlist = () => (
  <PlaylistPane>
    <PlaylistHead>
      <Icon name="tri" color="#1c4a50" />
      <Icon name="magnet" />
      <Spacer $w={9} />
      <Icon name="pencil" />
      <Icon name="brush" color="#4d7590" />
      <Icon name="ban" />
      <Icon name="mute" />
      <Icon name="slip" />
      <Icon name="slice" />
      <Icon name="select" />
      <Icon name="search" />
      <Icon name="playback" />
      <Spacer $w={8} />
      <Icon name="speaker" />
      <span>Playlist - Arrangement</span>
    </PlaylistHead>
    <PlaylistBody>
      <div>
        <PickerTabs>
          <button aria-label="Patterns"><Icon name="piano" color="#eceef0" /></button>
          <button aria-label="Audio"><Icon name="wave" color="#7d8487" /></button>
          <button aria-label="Automation"><Icon name="auto" color="#7d8487" /></button>
        </PickerTabs>
        <PickerCols>
          <PatternList>
            {patterns.map(([name, [from, to, edge, ink, note], notes]) => (
              <li key={name}>
                <PatternItem $from={from} $to={to} $edge={edge} $ink={ink}>
                  <Notes width="133" height="26" fill={note} opacity=".6">
                    {notes.map(([x, y, w], i) => (
                      <rect key={i} x={x} y={y - 1} width={w} height="2" />
                    ))}
                  </Notes>
                  <Icon name="pattern" />
                  {name}
                  {name === "Chords #2" && (
                    <Current width="8" height="13"><path d="M1 1l6 5.500-6 5.500z" fill="#e8405a" stroke="#2a0d14" /></Current>
                  )}
                </PatternItem>
              </li>
            ))}
          </PatternList>
          <PickerScroll>
            <span><svg width="2" height="6"><path d="M0 0h2v6H0z" /></svg></span>
            <span><Icon name="chevUp" /></span>
            <span />
          </PickerScroll>
        </PickerCols>
      </div>
      <div>
        <TracksHead>
          <HeadRow $tools>
            <Icon name="wave" color="#ffa60a" />
            <Icon name="auto" color="#7d5a1e" />
            <Icon name="piano" color="#7d5a1e" />
          </HeadRow>
          <HeadRow>
            <HeadCheck>Z-CROSS<input type="checkbox" /></HeadCheck>
            <HeadCheck>拉伸<input type="checkbox" /></HeadCheck>
          </HeadRow>
        </TracksHead>
        <Tracks>
          {tracks.map(([name, icon, bg, ink, group, last]) => (
            <Track key={name} $bg={bg} $ink={ink} $group={group} $last={last}>
              {name}
              <TrackFoot $group={group}>
                <Dots $group={group}>...</Dots>
                <Icon name={icon} />
                {group && <Icon name="triUp" />}
                <Led defaultChecked aria-label={`${name} track on`} />
              </TrackFoot>
            </Track>
          ))}
        </Tracks>
      </div>
      <Timeline>
        <Overview>
          <button aria-label="Scroll left"><Icon name="chevLeft" /></button>
          <MiniMap>
            <svg width="200" height="18">
              <path d="M0 2h200" stroke="#7a4f8c" strokeWidth="2" />
              <path d="M0 9.500h200" stroke="#8d6bbf" strokeWidth="3" />
              <path d="M0 1h5L0 6zM11 1h5l-5 5z" fill="#f0ead0" />
              <path d="M56 1h5l-5 5z" fill="#5a55b8" />
            </svg>
          </MiniMap>
        </Overview>
        <Ruler>
          <Beats><span>1</span><span>2</span></Beats>
          <Playhead width="9" height="10"><path d="M0 0h9L0 10z" fill="#d4d8d8" /></Playhead>
          <Marker>Intro</Marker>
        </Ruler>
        <Grid>
          <Clip>
            <ClipTitle><Icon name="auto" scale={0.6} />Vocal Delay Vol</ClipTitle>
          </Clip>
        </Grid>
      </Timeline>
    </PlaylistBody>
  </PlaylistPane>
);

const App = () => {
  return (
    <>
      <GlobalStyle />
      <Page>
        <Header />
        <Body>
          <Browser />
          <ChannelRack />
          <Playlist />
        </Body>
      </Page>
    </>
  );
};

export default App;
